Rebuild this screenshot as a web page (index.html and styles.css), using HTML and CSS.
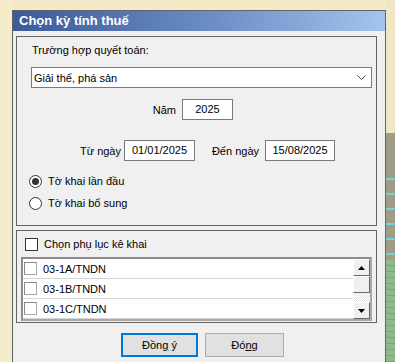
FILE: index.html
```html
<!DOCTYPE html>
<html lang="vi">
<head>
    <meta charset="UTF-8">
    <meta name="viewport" content="width=device-width, initial-scale=1.0">
    <title>Chọn kỳ tính thuế</title>
    <link rel="stylesheet" href="styles.css">
</head>

<body>
    <div class="desk">
        <div class="side-left"></div>

        <div class="window">
            <div class="titlebar">Chọn kỳ tính thuế</div>

            <div class="client">
                <div class="group group-period">
                    <div class="caption">Trường hợp quyết toán:</div>

                    <div class="combo">
                        <span>Giải thể, phá sản</span>
                        <svg class="chevron" width="9" height="6" viewBox="0 0 9 6">
                            <path d="M0.5 0.5 L4.5 4.5 L8.5 0.5" fill="none" stroke="#404040" stroke-width="1"/>
                        </svg>
                    </div>

                    <div class="row row-year">
                        <span class="lbl lbl-year">Năm</span>
                        <div class="field field-year">2025</div>
                    </div>

                    <div class="row row-dates">
                        <span class="lbl lbl-from">Từ ngày</span>
                        <div class="field field-from">01/01/2025</div>
                        <span class="lbl lbl-to">Đến ngày</span>
                        <div class="field field-to">15/08/2025</div>
                    </div>

                    <!-- Loại tờ khai -->
                    <div class="radio-list">
                        <label class="radio">
                            <span class="dot checked"></span>
                            Tờ khai lần đầu
                        </label>
                        <label class="radio">
                            <span class="dot"></span>
                            Tờ khai bổ sung
                        </label>
                    </div>
                </div>

                <div class="group group-annex">
                    <label class="check-all">
                        <span class="box"></span>
                        Chọn phụ lục kê khai
                    </label>

                    <div class="annex-list">
                        <div class="annex-items">
                            <div class="annex-item"><span class="box box-light"></span>03-1A/TNDN</div>
                            <div class="annex-item"><span class="box box-light"></span>03-1B/TNDN</div>
                            <div class="annex-item"><span class="box box-light"></span>03-1C/TNDN</div>
                        </div>
                        <div class="scrollbar">
                            <div class="scroll-btn">
                                <svg width="7" height="4" viewBox="0 0 7 4"><path d="M0 4 L3.5 0 L7 4 Z" fill="#000"/></svg>
                            </div>
                            <div class="scroll-thumb"></div>
                            <div class="scroll-track"></div>
                            <div class="scroll-btn">
                                <svg width="7" height="4" viewBox="0 0 7 4"><path d="M0 0 L3.5 4 L7 0 Z" fill="#000"/></svg>
                            </div>
                        </div>
                    </div>
                </div>

                <div class="actions">
                    <button class="btn btn-default">Đồn<u>g</u> ý</button>
                    <button class="btn btn-close">Đó<u>n</u>g</button>
                </div>
            </div>
        </div>

        <div class="side-right">
            <div class="strip-top"></div>
            <div class="strip-khaki"></div>
            <div class="strip-streaks"></div>
            <div class="strip-low"></div>
        </div>
    </div>
</body>
</html>
```

FILE: styles.css
```css
body
{
    margin: 0;
    background-color: #f3ebc8;
    font-family: "Liberation Sans", Arial, sans-serif;
    font-size: 11px;
    color: #000;
    overflow: hidden;
}

.desk
{
    display: flex;
    height: 362px;
    width: 395px;
}

.side-left
{
    width: 12px;
    background-color: #f4ecca;
}

.window
{
    width: 372px;
    height: 360px;
    margin-top: 10px;
    border: 1px solid #646464;
    background-color: #f0f0f0;
}

.titlebar
{
    height: 20px;
    line-height: 20px;
    padding-left: 6px;
    background: linear-gradient(to right, #3a5a99, #6d8fc6 55%, #a2c4ec);
    color: #fff;
    font-size: 13px;
    font-weight: bold;
}

.client
{
    padding: 5px 8px 0 3px;
}

.group
{
    border: 1px solid #646464;
}

.group-period
{
    height: 188px;
}

.caption
{
    margin: 6px 0 0 15px;
    line-height: 14px;
}

.combo
{
    display: flex;
    align-items: center;
    justify-content: space-between;
    height: 19px;
    width: 332px;
    margin: 10px 0 0 14px;
    padding: 0 5px 0 2px;
    border: 1px solid #7a7a7a;
    background-color: #fff;
}

.row
{
    display: flex;
    align-items: center;
}

.row-year
{
    margin: 11px 0 0 118px;
}

.row-dates
{
    margin: 20px 0 0 62px;
}

.lbl
{
    text-align: right;
}

.lbl-year
{
    width: 41px;
    margin-right: 6px;
}

.lbl-from
{
    width: 42px;
    margin-right: 3px;
}

.lbl-to
{
    width: 64px;
    margin-right: 6px;
}

.field
{
    height: 19px;
    line-height: 19px;
    border: 1px solid #7a7a7a;
    background-color: #fff;
    text-align: center;
}

.field-year
{
    width: 49px;
}

.field-from
{
    width: 69px;
}

.field-to
{
    width: 68px;
}

.radio-list
{
    display: flex;
    flex-direction: column;
    gap: 6px;
    margin: 12px 0 0 12px;
}

.radio
{
    display: flex;
    align-items: center;
    height: 16px;
    gap: 6px;
}

.dot
{
    width: 11px;
    height: 11px;
    border: 1px solid #333;
    border-radius: 50%;
    background-color: #fff;
    display: flex;
    align-items: center;
    justify-content: center;
}

.dot.checked::after
{
    content: "";
    width: 7px;
    height: 7px;
    border-radius: 50%;
    background-color: #333;
}

.group-annex
{
    margin-top: 4px;
    padding: 5px 0 1px 4px;
}

.check-all
{
    display: flex;
    align-items: center;
    gap: 6px;
    height: 16px;
    margin-left: 4px;
}

.box
{
    width: 11px;
    height: 11px;
    border: 1px solid #333;
    background-color: #fff;
    flex: none;
}

.box-light
{
    border-color: #a8a8a8;
    border-top-color: #8a8a8a;
    border-left-color: #8a8a8a;
}

.annex-list
{
    display: flex;
    width: 347px;
    height: 60px;
    margin-top: 5px;
    border: 2px solid;
    border-color: #8c8c8c #a8a8a8 #a8a8a8 #8c8c8c;
    background-color: #fff;
}

.annex-items
{
    flex: 1;
}

.annex-item
{
    display: flex;
    align-items: center;
    gap: 6px;
    height: 19px;
    padding-left: 1px;
    border-bottom: 1px solid #d6d6d6;
}

.scrollbar
{
    width: 17px;
    display: flex;
    flex-direction: column;
}

.scroll-btn
{
    height: 15px;
    display: flex;
    align-items: center;
    justify-content: center;
    background-color: #f0f0f0;
    border: 1px solid;
    border-color: #fff #696969 #696969 #fff;
}

.scroll-thumb
{
    height: 15px;
    background-color: #f0f0f0;
    border: 1px solid;
    border-color: #fff #696969 #696969 #fff;
}

.scroll-track
{
    flex: 1;
    background-color: #f4f4f4;
    background-image: repeating-conic-gradient(#fff 0 25%, #e4e4e4 0 50%);
    background-size: 2px 2px;
}

.actions
{
    display: flex;
    gap: 7px;
    margin: 10px 0 0 105px;
}

.btn
{
    width: 77px;
    height: 24px;
    border: 1px solid #adadad;
    background-color: #e1e1e1;
    font-family: "Liberation Sans", Arial, sans-serif;
    font-size: 11px;
    color: #000;
    padding: 0;
}

.btn-default
{
    border: 2px solid #0078d7;
}

.btn-close
{
    width: 79px;
}

.side-right
{
    width: 9px;
    display: flex;
    flex-direction: column;
}

.strip-top
{
    height: 133px;
    background-color: #efe7c5;
}

.strip-khaki
{
    height: 45px;
    background-color: #a09c86;
}

.strip-streaks
{
    height: 82px;
    background-color: #a09c86;
    background-image: repeating-linear-gradient(to bottom, #72d4d6 0 2px, transparent 2px 15px);
}

.strip-low
{
    flex: 1;
    background-color: #8db98b;
    background-image: repeating-linear-gradient(to bottom, transparent 0 5px, #7aa47a 5px 6px);
}
```
